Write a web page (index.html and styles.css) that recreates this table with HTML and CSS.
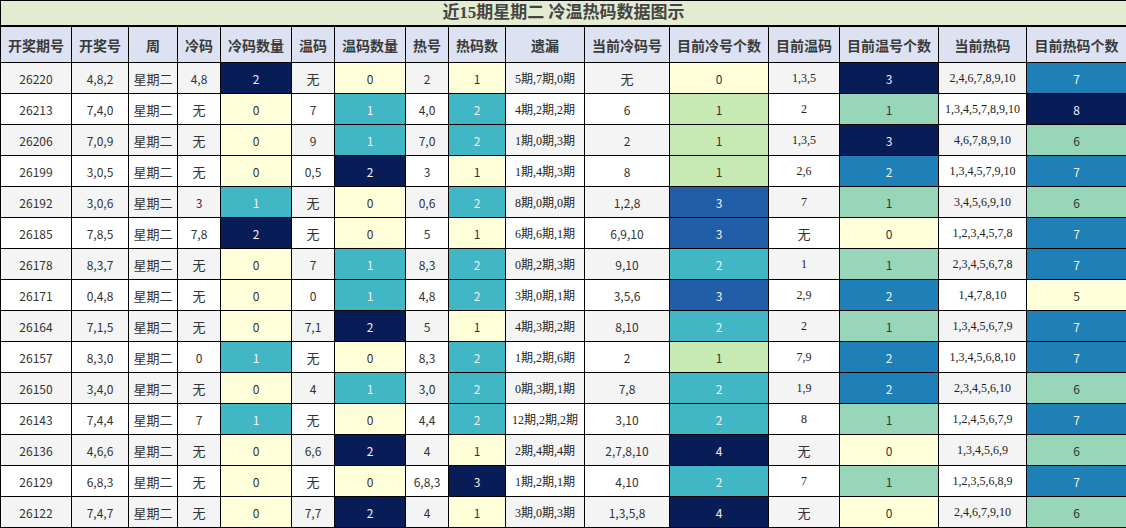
FILE: index.html
```html
<!DOCTYPE html>
<html lang="zh-CN">
<head>
<meta charset="utf-8">
<title>近15期星期二 冷温热码数据图示</title>
<link rel="stylesheet" href="styles.css">
</head>
<body>
<table class="grid">
<colgroup>
<col class="w71"><col class="w57"><col class="w49"><col class="w43"><col class="w71"><col class="w43"><col class="w71"><col class="w43"><col class="w57"><col class="w79"><col class="w85"><col class="w99"><col class="w71"><col class="w99"><col class="w88"><col class="w100">
</colgroup>
<thead>
<tr class="title"><th colspan="16">近15期星期二 冷温热码数据图示</th></tr>
<tr class="head">
<th>开奖期号</th><th>开奖号</th><th>周</th><th>冷码</th><th>冷码数量</th><th>温码</th><th>温码数量</th><th>热号</th><th>热码数</th><th>遗漏</th><th>当前冷码号</th><th>目前冷号个数</th><th>目前温码</th><th>目前温号个数</th><th>当前热码</th><th>目前热码个数</th>
</tr>
</thead>
<tbody>
<tr><td>26220</td><td>4,8,2</td><td class="wk">星期二</td><td>4,8</td><td class="nv">2</td><td class="wk">无</td><td class="y">0</td><td>2</td><td class="y">1</td><td class="sf">5期,7期,0期</td><td class="wk">无</td><td class="y">0</td><td class="sf">1,3,5</td><td class="nv">3</td><td class="sf">2,4,6,7,8,9,10</td><td class="bl">7</td></tr>
<tr><td>26213</td><td>7,4,0</td><td class="wk">星期二</td><td class="wk">无</td><td class="y">0</td><td>7</td><td class="tl">1</td><td>4,0</td><td class="tl">2</td><td class="sf">4期,2期,2期</td><td>6</td><td class="lg">1</td><td class="sf">2</td><td class="mt">1</td><td class="sf">1,3,4,5,7,8,9,10</td><td class="nv">8</td></tr>
<tr><td>26206</td><td>7,0,9</td><td class="wk">星期二</td><td class="wk">无</td><td class="y">0</td><td>9</td><td class="tl">1</td><td>7,0</td><td class="tl">2</td><td class="sf">1期,0期,3期</td><td>2</td><td class="lg">1</td><td class="sf">1,3,5</td><td class="nv">3</td><td class="sf">4,6,7,8,9,10</td><td class="mt">6</td></tr>
<tr><td>26199</td><td>3,0,5</td><td class="wk">星期二</td><td class="wk">无</td><td class="y">0</td><td>0,5</td><td class="nv">2</td><td>3</td><td class="y">1</td><td class="sf">1期,4期,3期</td><td>8</td><td class="lg">1</td><td class="sf">2,6</td><td class="bl">2</td><td class="sf">1,3,4,5,7,9,10</td><td class="bl">7</td></tr>
<tr><td>26192</td><td>3,0,6</td><td class="wk">星期二</td><td>3</td><td class="tl">1</td><td class="wk">无</td><td class="y">0</td><td>0,6</td><td class="tl">2</td><td class="sf">8期,0期,0期</td><td>1,2,8</td><td class="mb">3</td><td class="sf">7</td><td class="mt">1</td><td class="sf">3,4,5,6,9,10</td><td class="mt">6</td></tr>
<tr><td>26185</td><td>7,8,5</td><td class="wk">星期二</td><td>7,8</td><td class="nv">2</td><td class="wk">无</td><td class="y">0</td><td>5</td><td class="y">1</td><td class="sf">6期,6期,1期</td><td>6,9,10</td><td class="mb">3</td><td class="wk">无</td><td class="y">0</td><td class="sf">1,2,3,4,5,7,8</td><td class="bl">7</td></tr>
<tr><td>26178</td><td>8,3,7</td><td class="wk">星期二</td><td class="wk">无</td><td class="y">0</td><td>7</td><td class="tl">1</td><td>8,3</td><td class="tl">2</td><td class="sf">0期,2期,3期</td><td>9,10</td><td class="tl">2</td><td class="sf">1</td><td class="mt">1</td><td class="sf">2,3,4,5,6,7,8</td><td class="bl">7</td></tr>
<tr><td>26171</td><td>0,4,8</td><td class="wk">星期二</td><td class="wk">无</td><td class="y">0</td><td>0</td><td class="tl">1</td><td>4,8</td><td class="tl">2</td><td class="sf">3期,0期,1期</td><td>3,5,6</td><td class="mb">3</td><td class="sf">2,9</td><td class="bl">2</td><td class="sf">1,4,7,8,10</td><td class="y">5</td></tr>
<tr><td>26164</td><td>7,1,5</td><td class="wk">星期二</td><td class="wk">无</td><td class="y">0</td><td>7,1</td><td class="nv">2</td><td>5</td><td class="y">1</td><td class="sf">4期,3期,2期</td><td>8,10</td><td class="tl">2</td><td class="sf">2</td><td class="mt">1</td><td class="sf">1,3,4,5,6,7,9</td><td class="bl">7</td></tr>
<tr><td>26157</td><td>8,3,0</td><td class="wk">星期二</td><td>0</td><td class="tl">1</td><td class="wk">无</td><td class="y">0</td><td>8,3</td><td class="tl">2</td><td class="sf">1期,2期,6期</td><td>2</td><td class="lg">1</td><td class="sf">7,9</td><td class="bl">2</td><td class="sf">1,3,4,5,6,8,10</td><td class="bl">7</td></tr>
<tr><td>26150</td><td>3,4,0</td><td class="wk">星期二</td><td class="wk">无</td><td class="y">0</td><td>4</td><td class="tl">1</td><td>3,0</td><td class="tl">2</td><td class="sf">0期,3期,1期</td><td>7,8</td><td class="tl">2</td><td class="sf">1,9</td><td class="bl">2</td><td class="sf">2,3,4,5,6,10</td><td class="mt">6</td></tr>
<tr><td>26143</td><td>7,4,4</td><td class="wk">星期二</td><td>7</td><td class="tl">1</td><td class="wk">无</td><td class="y">0</td><td>4,4</td><td class="tl">2</td><td class="sf">12期,2期,2期</td><td>3,10</td><td class="tl">2</td><td class="sf">8</td><td class="mt">1</td><td class="sf">1,2,4,5,6,7,9</td><td class="bl">7</td></tr>
<tr><td>26136</td><td>4,6,6</td><td class="wk">星期二</td><td class="wk">无</td><td class="y">0</td><td>6,6</td><td class="nv">2</td><td>4</td><td class="y">1</td><td class="sf">2期,4期,4期</td><td>2,7,8,10</td><td class="nv">4</td><td class="wk">无</td><td class="y">0</td><td class="sf">1,3,4,5,6,9</td><td class="mt">6</td></tr>
<tr><td>26129</td><td>6,8,3</td><td class="wk">星期二</td><td class="wk">无</td><td class="y">0</td><td class="wk">无</td><td class="y">0</td><td>6,8,3</td><td class="nv">3</td><td class="sf">1期,2期,1期</td><td>4,10</td><td class="tl">2</td><td class="sf">7</td><td class="mt">1</td><td class="sf">1,2,3,5,6,8,9</td><td class="bl">7</td></tr>
<tr><td>26122</td><td>7,4,7</td><td class="wk">星期二</td><td class="wk">无</td><td class="y">0</td><td>7,7</td><td class="nv">2</td><td>4</td><td class="y">1</td><td class="sf">3期,0期,3期</td><td>1,3,5,8</td><td class="nv">4</td><td class="wk">无</td><td class="y">0</td><td class="sf">2,4,6,7,9,10</td><td class="mt">6</td></tr>
</tbody>
</table>
</body>
</html>
```

FILE: styles.css
```css
html, body {
  margin: 0;
  padding: 0;
  background: #ffffff;
}

.grid {
  border-collapse: collapse;
  table-layout: fixed;
  width: 1126px;
  font-family: "Noto Sans CJK SC", sans-serif;
  font-size: 12px;
  color: #333333;
}

.w43 { width: 43px; }
.w49 { width: 49px; }
.w57 { width: 57px; }
.w71 { width: 71px; }
.w79 { width: 79px; }
.w85 { width: 85px; }
.w88 { width: 88px; }
.w99 { width: 99px; }
.w100 { width: 100px; }

.grid th,
.grid td {
  border: 1px solid #000000;
  padding: 0;
  text-align: center;
  vertical-align: middle;
  white-space: nowrap;
  overflow: hidden;
}

.title th {
  height: 24px;
  background: #e3ebd1;
  font-family: "Liberation Serif", "Noto Sans CJK SC", serif;
  font-size: 17px;
  font-weight: bold;
  color: #444444;
  border-bottom: 2px solid #000000;
  line-height: 20px;
}

.head th {
  height: 35px;
  background: #dde2f2;
  font-size: 14px;
  font-weight: bold;
  color: #3a3a3a;
}

.grid tbody td {
  height: 30px;
}

.grid tbody tr:nth-child(odd) { background: #f4f4f4; }
.grid tbody tr:nth-child(even) { background: #ffffff; }

.sf {
  font-family: "Liberation Serif", "Noto Sans CJK SC", serif;
  color: #222222;
}

.wk {
  font-size: 13px;
}

.grid tbody .y  { background: #ffffd9; color: #333333; }
.grid tbody .lg { background: #c7e9b4; color: #333333; }
.grid tbody .mt { background: #97d6b9; color: #333333; }
.grid tbody .tl { background: #41b6c4; color: #f1f1f1; }
.grid tbody .bl { background: #1f80b8; color: #f1f1f1; }
.grid tbody .mb { background: #225ea8; color: #f1f1f1; }
.grid tbody .nv { background: #081d58; color: #f1f1f1; }
```
